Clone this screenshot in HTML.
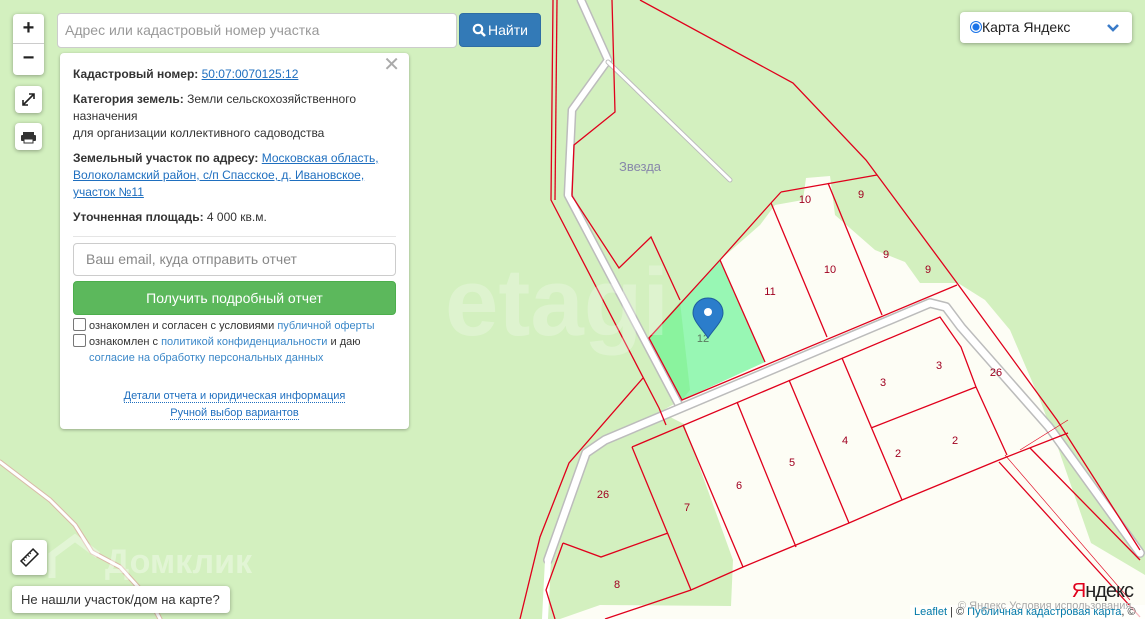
<!DOCTYPE html>
<html><head><meta charset="utf-8"><style>
*{box-sizing:border-box}
html,body{margin:0;width:1145px;height:619px;overflow:hidden}
body{position:relative;font-family:"Liberation Sans","Noto Sans CJK SC",sans-serif;background:#d3f0bf}
svg.map{position:absolute;left:0;top:0}
.ctl{position:absolute;background:#fff;border-radius:4px;box-shadow:0 1px 4px rgba(0,0,0,.35)}
.panel{position:absolute;left:60px;top:53px;width:349px;height:376px;background:#fff;border-radius:4px;box-shadow:0 1px 3px rgba(0,0,0,.3);padding:13px 13px;font-size:12px;color:#333;line-height:17px}
.panel p{margin:0 0 8px}
.panel b{font-weight:bold}
a{color:#1f6fbf}
.u{text-decoration:underline}
.chk{display:inline-block;width:13px;height:13px;border:1px solid #777;border-radius:2px;vertical-align:-2px;margin-right:3px;background:#fff}
.lb{color:#3a87c8}
</style></head><body>
<svg class="map" width="1145" height="619" viewBox="0 0 1145 619">
<g fill="#fdfdf5">
<polygon points="681,400 765,362 720,260 760,225 775,205 803,200 806,178 830,176 835,215 875,250 905,262 920,283 958,283 985,300 1010,330 1040,400 1057,445 1091,543 1145,575 1145,619 560,619 600,605 731,606 733,560 684,424 660,412"/>
</g>
<polygon points="649,338 720,260 765,362 682,400" fill="#98f7b4"/>
<polygon points="649,338 680,302 690,390 682,400" fill="#80f090" opacity=".6"/>
<g fill="none" stroke-linejoin="round" stroke-linecap="round">
<polyline points="581,0 608,60 572,110 568,195 680,407" stroke="#bcbcbc" stroke-width="9"/>
<polyline points="581,0 608,60 572,110 568,195 680,407" stroke="#fff" stroke-width="6"/>
<polyline points="608,62 730,180" stroke="#bcbcbc" stroke-width="5"/>
<polyline points="608,62 730,180" stroke="#fff" stroke-width="3"/>
<polyline points="548,560 586,453 605,440 930,303 946,307 961,327 1049,427 1140,553" stroke="#bcbcbc" stroke-width="10"/>
<polyline points="548,560 586,453 605,440 930,303 946,307 961,327 1049,427 1140,553" stroke="#fff" stroke-width="7"/>
<polyline points="548,560 545,619" stroke="#fff" stroke-width="6"/>
<polyline points="0,462 50,500 75,525 92,552 120,567 150,600 160,619" stroke="#d9b9a6" stroke-width="5"/>
<polyline points="0,462 50,500 75,525 92,552 120,567 150,600 160,619" stroke="#fff" stroke-width="3"/>
</g>
<g fill="none" stroke="#e0001c" stroke-width="1.3">
<polyline points="640,0 793,83 866,160 957,283 1057,420 1140,550"/>
<polyline points="553,0 551,200 659,408 666,425"/>
<polyline points="557,0 555,200"/>
<polyline points="643,378 569,463 540,537 520,619"/>
<polyline points="612,0 615,112 574,145 572,196 619,268 651,237 680,300"/>
<polyline points="781,192 877,175"/>
<polyline points="781,192 771,203 720,260 649,338 682,400 957,285"/>
<polyline points="720,260 765,362"/>
<polyline points="771,203 827,337"/>
<polyline points="828,183 882,315"/>
<polyline points="632,447 940,317 961,347 976,387 1007,455"/>
<polyline points="871,428 976,387"/>
<polyline points="842,358 902,500"/>
<polyline points="789,380 849,523"/>
<polyline points="737,402 796,547"/>
<polyline points="683,425 743,567"/>
<polyline points="632,447 691,590"/>
<polyline points="605,619 691,590 743,567 849,523 902,500 999,460 1068,433"/>
<polyline points="563,543 601,557 668,533"/>
<polyline points="563,543 546,590 555,619"/>
<polyline points="999,462 1140,617"/>
<polyline points="1030,448 1140,560"/>
<polyline points="1005,455 1130,600" stroke-width=".6"/>
<polyline points="1020,450 1068,420" stroke-width=".6"/>
</g>
<g font-family="Liberation Sans, sans-serif" font-size="11" fill="#a00020" text-anchor="middle">
<text x="805" y="203">10</text><text x="861" y="198">9</text><text x="770" y="295">11</text><text x="830" y="273">10</text><text x="886" y="258">9</text><text x="928" y="273">9</text><text x="883" y="386">3</text><text x="939" y="369">3</text><text x="996" y="376">26</text><text x="845" y="444">4</text><text x="898" y="457">2</text><text x="955" y="444">2</text><text x="792" y="466">5</text><text x="739" y="489">6</text><text x="687" y="511">7</text><text x="603" y="498">26</text><text x="617" y="588">8</text>
<text x="703" y="342" fill="#5a7a60">12</text>
</g>
<text x="640" y="171" font-family="Liberation Sans, sans-serif" font-size="13" fill="#8888aa" text-anchor="middle">Звезда</text>
<text x="445" y="335" font-family="Liberation Sans, sans-serif" font-size="96" font-weight="bold" fill="#fff" opacity=".25">etagi</text>
<text x="105" y="573" font-family="Liberation Sans, sans-serif" font-size="34" font-weight="bold" fill="#fff" opacity=".35">Домклик</text>
<path d="M52 578 V555 L75 538 L98 555" fill="none" stroke="#fff" stroke-width="7" opacity=".35"/>
<path d="M708 298 c-9 0 -15 7 -15 15 c0 8 10 17 15 25 c5 -8 15 -17 15 -25 c0 -8 -6 -15 -15 -15z" fill="#2b7dcb" stroke="#1d5e9e"/>
<circle cx="708" cy="312" r="4" fill="#fff"/>
<text x="1133" y="597" font-family="Liberation Sans, sans-serif" font-size="20" fill="#e0001c" text-anchor="end" style="letter-spacing:-1px">Я<tspan fill="#222">ндекс</tspan></text>
</svg>

<div class="ctl" style="left:13px;top:14px;width:31px;height:61px">
<div style="height:30px;border-bottom:1px solid #ccc;text-align:center;font:bold 20px/29px 'Liberation Sans',sans-serif;color:#222">+</div>
<div style="text-align:center;font:bold 20px/28px 'Liberation Sans',sans-serif;color:#222">−</div>
</div>
<div class="ctl" style="left:15px;top:86px;width:27px;height:27px">
<svg width="27" height="27"><path d="M8 19 L19 8 M14 8 H19 V13 M8 14 V19 H13" fill="none" stroke="#222" stroke-width="1.6"/></svg></div>
<div class="ctl" style="left:15px;top:123px;width:27px;height:27px">
<svg width="27" height="27"><rect x="8" y="9" width="11" height="4" fill="#333"/><rect x="6" y="12" width="15" height="6" rx="1" fill="#333"/><rect x="9" y="16" width="9" height="4" fill="#fff" stroke="#333"/></svg></div>

<div style="position:absolute;left:57px;top:13px;width:400px;height:35px;background:#fff;border:1px solid #ccc;border-radius:4px;font-size:14px;color:#999;padding:8px 7px">Адрес или кадастровый номер участка</div>
<div style="position:absolute;left:459px;top:13px;width:82px;height:34px;background:#337ab7;border:1px solid #2e6da4;border-radius:4px;color:#fff;font-size:14px;line-height:32px;text-align:center"><svg width="14" height="14" style="vertical-align:-2px;margin-right:2px"><circle cx="6" cy="6" r="4.2" fill="none" stroke="#fff" stroke-width="2.2"/><path d="M9 9 L13 13" stroke="#fff" stroke-width="2.6"/></svg>Найти</div>

<div class="panel">
<div style="position:absolute;right:9px;top:4px;font-size:20px;color:#aaa">✕</div>
<p><b>Кадастровый номер:</b> <a class="u">50:07:0070125:12</a></p>
<p><b>Категория земель:</b> Земли сельскохозяйственного назначения<br>для организации коллективного садоводства</p>
<p><b>Земельный участок по адресу:</b> <a class="u">Московская область, Волоколамский район, с/п Спасское, д. Ивановское, участок №11</a></p>
<p style="margin-bottom:10px"><b>Уточненная площадь:</b> 4 000 кв.м.</p>
<div style="border-top:1px solid #e5e5e5;margin:0 0 6px"></div>
<div style="height:33px;border:1px solid #ccc;border-radius:4px;font-size:14px;color:#888;padding:7px 12px;margin-bottom:5px">Ваш email, куда отправить отчет</div>
<div style="height:34px;background:#5cb85c;border:1px solid #4cae4c;border-radius:4px;color:#fff;font-size:14px;line-height:32px;text-align:center;margin-bottom:3px">Получить подробный отчет</div>
<div style="font-size:11px;line-height:16px"><span class="chk"></span>ознакомлен и согласен с условиями <span class="lb">публичной оферты</span><br><span class="chk"></span>ознакомлен с <span class="lb">политикой конфиденциальности</span> и даю<br><span style="margin-left:16px" class="lb">согласие на обработку персональных данных</span></div>
<div style="text-align:center;font-size:11px;line-height:17px;margin-top:22px"><span style="color:#1f6fbf;border-bottom:1px dotted #1f6fbf">Детали отчета и юридическая информация</span><br><span style="color:#1f6fbf;border-bottom:1px dotted #1f6fbf">Ручной выбор вариантов</span></div>
</div>

<div class="ctl" style="left:960px;top:12px;width:172px;height:31px;font-size:14px;color:#222;line-height:31px;padding-left:10px;white-space:nowrap">
<span style="display:inline-block;width:12px;height:12px;border-radius:50%;border:1px solid #1a73e8;background:radial-gradient(#1a73e8 45%,#fff 55%);vertical-align:-1px"></span>Карта Яндекс
<svg width="14" height="10" style="position:absolute;right:12px;top:11px"><path d="M2 2 L7 7 L12 2" fill="none" stroke="#3a7bc8" stroke-width="2.6"/></svg></div>

<div class="ctl" style="left:12px;top:540px;width:35px;height:35px">
<svg width="35" height="35"><g transform="rotate(-45 17.5 17.5)"><rect x="9" y="14" width="17" height="7" fill="#fff" stroke="#222" stroke-width="1.5"/><path d="M12 14v3M15 14v2M18 14v3M21 14v2" stroke="#222"/></g></svg></div>
<div class="ctl" style="left:12px;top:586px;width:218px;height:27px;font-size:13px;color:#333;line-height:27px;padding-left:9px;white-space:nowrap;overflow:hidden">Не нашли участок/дом на карте?</div>

<div style="position:absolute;right:0;bottom:0;height:14px;background:rgba(255,255,255,.7);font-size:11px;line-height:14px;padding:0 4px;color:#333;width:235px;white-space:nowrap;overflow:hidden"><a style="text-decoration:none;color:#0078a8">Leaflet</a> | © <a style="text-decoration:none;color:#0078a8">Публичная кадастровая карта</a>, ©</div>
<div style="position:absolute;left:958px;top:600px;font-size:11px;color:#aaa;white-space:nowrap">© Яндекс  Условия использования</div>
</body></html>
